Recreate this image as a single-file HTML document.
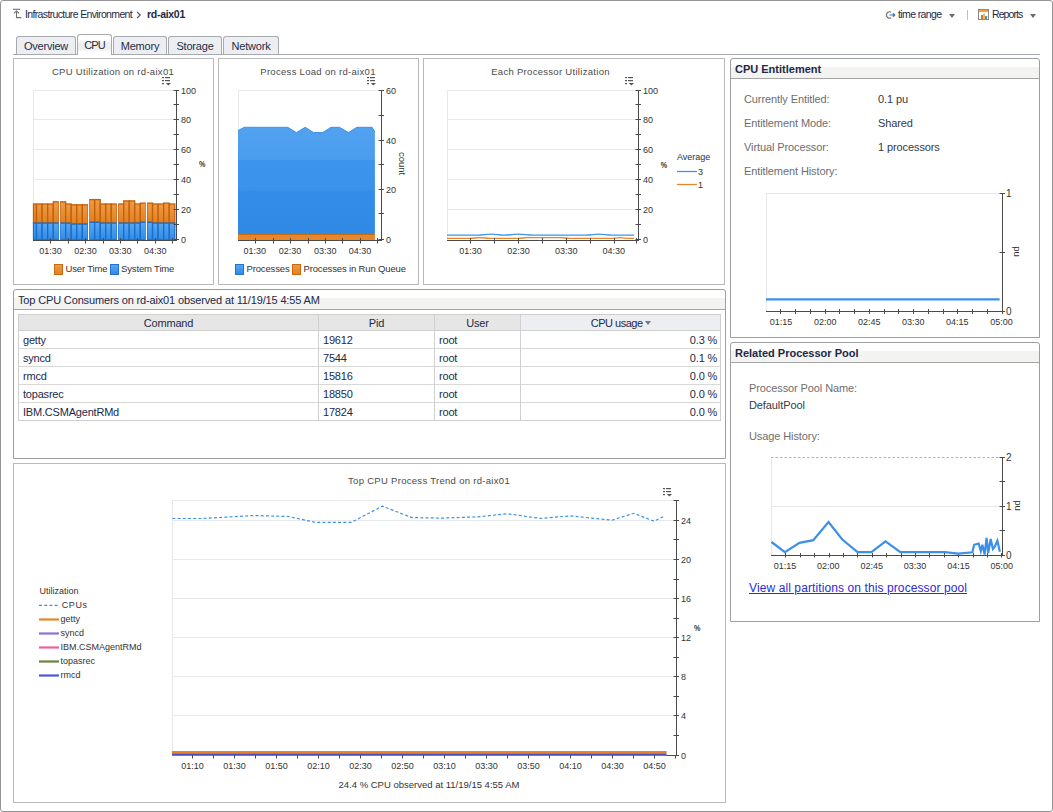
<!DOCTYPE html>
<html><head><meta charset="utf-8">
<style>
*{margin:0;padding:0;box-sizing:border-box}
html,body{width:1053px;height:812px;overflow:hidden;background:#fff;font-family:"Liberation Sans",sans-serif}
.a{position:absolute}
#frame{left:0;top:0;width:1053px;height:812px;border:1px solid #959595;border-radius:3px}
.t{position:absolute;white-space:nowrap;line-height:1}
.panel{position:absolute;border:1px solid #b9b9b9;background:#fff}
.rpanel{position:absolute;border:1px solid #9c9ea2;border-radius:3px 3px 0 0;background:#fff}
.tab{position:absolute;top:36px;height:18px;border:1px solid #a6a9ae;border-bottom:none;border-radius:3px 3px 0 0;background:#eceef2;font-size:11px;color:#1f2d45;text-align:center;line-height:18px;letter-spacing:-0.2px}
.tab.act{top:34px;height:21px;background:linear-gradient(#fff 0,#fff 20%,#eeeeee 45%,#eeeeee 70%,#fff 85%);line-height:21px;letter-spacing:-0.9px}
svg text{font-family:"Liberation Sans",sans-serif}
.th{font-size:11px;color:#1c2a48;letter-spacing:-0.2px}
.td{font-size:11px;color:#1c2a48;letter-spacing:-0.2px}
.hd{font-size:11px;font-weight:bold;color:#1c2a48}
.lb{font-size:11px;color:#6e6e6e;letter-spacing:-0.1px}
.vl{font-size:11px;color:#333a48;letter-spacing:-0.1px}
#ov{position:absolute;left:0;top:0}
</style></head><body>
<div class="a" id="frame"></div>

<!-- breadcrumb -->
<svg class="a" style="left:12px;top:8px" width="10" height="11" viewBox="0 0 10 11">
 <path d="M1 1.3H8" stroke="#707070" stroke-width="1.1" fill="none"/>
 <path d="M1.8 5.4L4.5 2.9L7.2 5.4M4.5 3.2V9.6H9.3" stroke="#707070" stroke-width="1.1" fill="none"/>
</svg>
<div class="t" style="left:25px;top:9px;font-size:10.5px;color:#1c2a48;letter-spacing:-0.64px">Infrastructure Environment</div>
<svg class="a" style="left:135px;top:11px" width="8" height="8" viewBox="0 0 8 8"><path d="M2 0.8L5.2 4L2 7.2" stroke="#555" stroke-width="1.2" fill="none"/></svg>
<div class="t" style="left:147px;top:9px;font-size:10.5px;font-weight:bold;color:#1c2a48;letter-spacing:-0.29px">rd-aix01</div>

<!-- top right -->
<svg class="a" style="left:885px;top:10px" width="11" height="10" viewBox="0 0 11 10">
 <path d="M6.2 2.2A3.2 3.2 0 1 0 6.2 7.8" stroke="#6a6a6a" stroke-width="1.1" fill="none"/>
 <path d="M4.5 5H9.5M7.8 3.2L9.8 5L7.8 6.8" stroke="#2d6fc0" stroke-width="1.1" fill="none"/>
</svg>
<div class="t" style="left:898px;top:9px;font-size:10.5px;color:#1c2a48;letter-spacing:-0.62px">time range</div>
<div class="a" style="left:949px;top:14px;width:0;height:0;border-left:3.5px solid transparent;border-right:3.5px solid transparent;border-top:4px solid #6b6b6b"></div>
<div class="a" style="left:967px;top:10px;width:1px;height:10px;background:#c0c0c0"></div>
<svg class="a" style="left:978px;top:9px" width="11" height="11" viewBox="0 0 11 11">
 <rect x="0.5" y="0.5" width="10" height="10" fill="#fff" stroke="#8a8a8a"/>
 <rect x="1" y="1" width="9" height="2" fill="#f0a040"/>
 <rect x="3" y="6" width="2" height="4" fill="#e07030"/>
 <rect x="5" y="4.5" width="2" height="5.5" fill="#f0c040"/>
 <rect x="7" y="7" width="2" height="3" fill="#4a90d8"/>
</svg>
<div class="t" style="left:992px;top:9px;font-size:10.5px;color:#1c2a48;letter-spacing:-0.9px">Reports</div>
<div class="a" style="left:1030px;top:14px;width:0;height:0;border-left:3.5px solid transparent;border-right:3.5px solid transparent;border-top:4px solid #6b6b6b"></div>

<!-- tabs -->
<div class="a" style="left:13px;top:54px;width:1027px;height:1px;background:#a6a9ae"></div>
<div class="tab" style="left:16px;width:60px">Overview</div>
<div class="tab act" style="left:77px;width:35px">CPU</div>
<div class="tab" style="left:113px;width:54px">Memory</div>
<div class="tab" style="left:168px;width:54px">Storage</div>
<div class="tab" style="left:223px;width:56px">Network</div>

<!-- panels -->
<div class="panel" style="left:13px;top:58px;width:201px;height:227px"></div>
<div class="panel" style="left:218px;top:58px;width:201px;height:227px"></div>
<div class="panel" style="left:423px;top:58px;width:302px;height:227px"></div>
<div class="rpanel" style="left:13px;top:289px;width:713px;height:170px"></div>
<div class="panel" style="left:13px;top:463px;width:713px;height:340px"></div>
<div class="rpanel" style="left:730px;top:58px;width:310px;height:280px"></div>
<div class="rpanel" style="left:730px;top:342px;width:310px;height:280px"></div>

<!-- table panel header -->
<div class="a" style="left:14px;top:298px;width:711px;height:11px;background:#f3f3f2"></div>
<div class="a" style="left:14px;top:309px;width:711px;height:1px;background:#a4a4a4"></div>
<div class="t" style="left:18px;top:295px;font-size:11px;color:#1c2a48;letter-spacing:-0.15px">Top CPU Consumers on rd-aix01 observed at 11/19/15 4:55 AM</div>

<!-- table -->
<div class="a" style="left:18px;top:314px;width:703px;height:107px;border:1px solid #cfcfcf;background:#fff"></div>
<div class="a" style="left:19px;top:315px;width:501px;height:15px;background:#e6e6e6"></div>
<div class="a" style="left:520px;top:315px;width:200px;height:15px;background:#eceef2"></div>
<div class="a" style="left:19px;top:330px;width:701px;height:1px;background:#cfcfcf"></div>
<div class="a" style="left:19px;top:348px;width:701px;height:1px;background:#d8d8d8"></div>
<div class="a" style="left:19px;top:366px;width:701px;height:1px;background:#d8d8d8"></div>
<div class="a" style="left:19px;top:384px;width:701px;height:1px;background:#d8d8d8"></div>
<div class="a" style="left:19px;top:402px;width:701px;height:1px;background:#d8d8d8"></div>
<div class="a" style="left:318px;top:315px;width:1px;height:105px;background:#d0d0d0"></div>
<div class="a" style="left:434px;top:315px;width:1px;height:105px;background:#d0d0d0"></div>
<div class="a" style="left:520px;top:315px;width:1px;height:105px;background:#d0d0d0"></div>
<div class="t th" style="left:19px;width:299px;top:318px;text-align:center">Command</div>
<div class="t th" style="left:319px;width:115px;top:318px;text-align:center">Pid</div>
<div class="t th" style="left:435px;width:85px;top:318px;text-align:center">User</div>
<div class="t th" style="left:521px;width:200px;top:318px;text-align:center;padding-left:0;letter-spacing:-0.5px">CPU usage <span style="display:inline-block;width:0;height:0;border-left:3.5px solid transparent;border-right:3.5px solid transparent;border-top:4px solid #6e7a88;vertical-align:2px"></span></div>
<div class="t td" style="left:23px;top:335px">getty</div>
<div class="t td" style="left:323px;top:335px">19612</div>
<div class="t td" style="left:439px;top:335px">root</div>
<div class="t td" style="left:520px;width:197px;top:335px;text-align:right">0.3 %</div>
<div class="t td" style="left:23px;top:353px">syncd</div>
<div class="t td" style="left:323px;top:353px">7544</div>
<div class="t td" style="left:439px;top:353px">root</div>
<div class="t td" style="left:520px;width:197px;top:353px;text-align:right">0.1 %</div>
<div class="t td" style="left:23px;top:371px">rmcd</div>
<div class="t td" style="left:323px;top:371px">15816</div>
<div class="t td" style="left:439px;top:371px">root</div>
<div class="t td" style="left:520px;width:197px;top:371px;text-align:right">0.0 %</div>
<div class="t td" style="left:23px;top:389px">topasrec</div>
<div class="t td" style="left:323px;top:389px">18850</div>
<div class="t td" style="left:439px;top:389px">root</div>
<div class="t td" style="left:520px;width:197px;top:389px;text-align:right">0.0 %</div>
<div class="t td" style="left:23px;top:407px">IBM.CSMAgentRMd</div>
<div class="t td" style="left:323px;top:407px">17824</div>
<div class="t td" style="left:439px;top:407px">root</div>
<div class="t td" style="left:520px;width:197px;top:407px;text-align:right">0.0 %</div>

<!-- CPU entitlement panel -->
<div class="a" style="left:731px;top:67px;width:308px;height:11px;background:#f3f3f2"></div>
<div class="a" style="left:731px;top:78px;width:308px;height:1px;background:#a4a4a4"></div>
<div class="t hd" style="left:735px;top:64px">CPU Entitlement</div>
<div class="t lb" style="left:744px;top:94px">Currently Entitled:</div>
<div class="t vl" style="left:878px;top:94px">0.1 pu</div>
<div class="t lb" style="left:744px;top:118px">Entitlement Mode:</div>
<div class="t vl" style="left:878px;top:118px">Shared</div>
<div class="t lb" style="left:744px;top:142px">Virtual Processor:</div>
<div class="t vl" style="left:878px;top:142px">1 processors</div>
<div class="t lb" style="left:744px;top:166px">Entitlement History:</div>

<!-- processor pool panel -->
<div class="a" style="left:731px;top:351px;width:308px;height:11px;background:#f3f3f2"></div>
<div class="a" style="left:731px;top:362px;width:308px;height:1px;background:#a4a4a4"></div>
<div class="t hd" style="left:735px;top:348px">Related Processor Pool</div>
<div class="t lb" style="left:749px;top:383px">Processor Pool Name:</div>
<div class="t vl" style="left:749px;top:400px">DefaultPool</div>
<div class="t lb" style="left:749px;top:431px">Usage History:</div>
<div class="t" style="left:749px;top:582px;font-size:12px;color:#2a2ae0;text-decoration:underline;letter-spacing:0.1px">View all partitions on this processor pool</div>

<svg id="ov" width="1053" height="812" viewBox="0 0 1053 812">
<defs>
<linearGradient id="gOr" x1="0" y1="0" x2="0" y2="1"><stop offset="0" stop-color="#ef9a45"/><stop offset="1" stop-color="#e2801f"/></linearGradient>
<linearGradient id="gBl" x1="0" y1="0" x2="0" y2="1"><stop offset="0" stop-color="#5aa8f2"/><stop offset="1" stop-color="#2e8ae8"/></linearGradient>
<linearGradient id="gArea" x1="0" y1="0" x2="0" y2="1"><stop offset="0" stop-color="#52a2f0"/><stop offset="0.3" stop-color="#4a9cee"/><stop offset="0.31" stop-color="#3d94ec"/><stop offset="0.59" stop-color="#3a92eb"/><stop offset="0.595" stop-color="#338de8"/><stop offset="1" stop-color="#2f8ae6"/></linearGradient>
</defs>
<text x="113" y="75" font-size="9.5" text-anchor="middle" fill="#4a4a4a" letter-spacing="0.3">CPU Utilization on rd-aix01</text>
<rect x="162" y="77" width="2" height="1.2" fill="#555"/>
<rect x="162" y="80" width="2" height="1.2" fill="#555"/>
<rect x="162" y="83" width="2" height="1.2" fill="#555"/>
<rect x="165" y="77" width="5" height="1.2" fill="#555"/>
<rect x="165" y="80" width="5" height="1.2" fill="#555"/>
<path d="M165.8 83h5.2l-2.6 2.6z" fill="#555"/>
<line x1="33.5" y1="90" x2="33.5" y2="240" stroke="#e6e8ec" stroke-width="1" />
<line x1="33" y1="90.5" x2="174" y2="90.5" stroke="#e6e8ec" stroke-width="1" />
<line x1="33" y1="119.5" x2="174" y2="119.5" stroke="#e6e8ec" stroke-width="1" />
<line x1="33" y1="149.5" x2="174" y2="149.5" stroke="#e6e8ec" stroke-width="1" />
<line x1="33" y1="179.5" x2="174" y2="179.5" stroke="#e6e8ec" stroke-width="1" />
<line x1="33" y1="209.5" x2="174" y2="209.5" stroke="#e6e8ec" stroke-width="1" />
<rect x="33.50" y="204.00" width="3.00" height="19.10" fill="url(#gOr)" stroke="#c2600a" stroke-width="1.3"/>
<rect x="33.50" y="223.10" width="3.00" height="16.90" fill="url(#gBl)" stroke="#196cc8" stroke-width="1.3"/>
<rect x="36.50" y="204.00" width="5.60" height="19.10" fill="url(#gOr)" stroke="#c2600a" stroke-width="1.3"/>
<rect x="36.50" y="223.10" width="5.60" height="16.90" fill="url(#gBl)" stroke="#196cc8" stroke-width="1.3"/>
<rect x="42.10" y="204.00" width="5.60" height="19.10" fill="url(#gOr)" stroke="#c2600a" stroke-width="1.3"/>
<rect x="42.10" y="223.10" width="5.60" height="16.90" fill="url(#gBl)" stroke="#196cc8" stroke-width="1.3"/>
<rect x="47.70" y="204.00" width="5.60" height="19.10" fill="url(#gOr)" stroke="#c2600a" stroke-width="1.3"/>
<rect x="47.70" y="223.10" width="5.60" height="16.90" fill="url(#gBl)" stroke="#196cc8" stroke-width="1.3"/>
<rect x="53.30" y="201.80" width="5.60" height="21.30" fill="url(#gOr)" stroke="#c2600a" stroke-width="1.3"/>
<rect x="53.30" y="223.10" width="5.60" height="16.90" fill="url(#gBl)" stroke="#196cc8" stroke-width="1.3"/>
<rect x="60.10" y="201.80" width="5.56" height="21.30" fill="url(#gOr)" stroke="#c2600a" stroke-width="1.3"/>
<rect x="60.10" y="223.10" width="5.56" height="16.90" fill="url(#gBl)" stroke="#196cc8" stroke-width="1.3"/>
<rect x="65.66" y="204.00" width="5.56" height="19.10" fill="url(#gOr)" stroke="#c2600a" stroke-width="1.3"/>
<rect x="65.66" y="223.10" width="5.56" height="16.90" fill="url(#gBl)" stroke="#196cc8" stroke-width="1.3"/>
<rect x="71.22" y="204.80" width="5.56" height="19.30" fill="url(#gOr)" stroke="#c2600a" stroke-width="1.3"/>
<rect x="71.22" y="224.10" width="5.56" height="15.90" fill="url(#gBl)" stroke="#196cc8" stroke-width="1.3"/>
<rect x="76.78" y="204.80" width="5.56" height="19.30" fill="url(#gOr)" stroke="#c2600a" stroke-width="1.3"/>
<rect x="76.78" y="224.10" width="5.56" height="15.90" fill="url(#gBl)" stroke="#196cc8" stroke-width="1.3"/>
<rect x="82.34" y="204.80" width="5.56" height="19.30" fill="url(#gOr)" stroke="#c2600a" stroke-width="1.3"/>
<rect x="82.34" y="224.10" width="5.56" height="15.90" fill="url(#gBl)" stroke="#196cc8" stroke-width="1.3"/>
<rect x="89.20" y="199.60" width="5.52" height="22.70" fill="url(#gOr)" stroke="#c2600a" stroke-width="1.3"/>
<rect x="89.20" y="222.30" width="5.52" height="17.70" fill="url(#gBl)" stroke="#196cc8" stroke-width="1.3"/>
<rect x="94.72" y="199.60" width="5.52" height="22.70" fill="url(#gOr)" stroke="#c2600a" stroke-width="1.3"/>
<rect x="94.72" y="222.30" width="5.52" height="17.70" fill="url(#gBl)" stroke="#196cc8" stroke-width="1.3"/>
<rect x="100.24" y="204.00" width="5.52" height="19.10" fill="url(#gOr)" stroke="#c2600a" stroke-width="1.3"/>
<rect x="100.24" y="223.10" width="5.52" height="16.90" fill="url(#gBl)" stroke="#196cc8" stroke-width="1.3"/>
<rect x="105.76" y="204.00" width="5.52" height="19.10" fill="url(#gOr)" stroke="#c2600a" stroke-width="1.3"/>
<rect x="105.76" y="223.10" width="5.52" height="16.90" fill="url(#gBl)" stroke="#196cc8" stroke-width="1.3"/>
<rect x="111.28" y="204.00" width="5.52" height="19.10" fill="url(#gOr)" stroke="#c2600a" stroke-width="1.3"/>
<rect x="111.28" y="223.10" width="5.52" height="16.90" fill="url(#gBl)" stroke="#196cc8" stroke-width="1.3"/>
<rect x="118.20" y="204.00" width="5.52" height="19.10" fill="url(#gOr)" stroke="#c2600a" stroke-width="1.3"/>
<rect x="118.20" y="223.10" width="5.52" height="16.90" fill="url(#gBl)" stroke="#196cc8" stroke-width="1.3"/>
<rect x="123.72" y="200.90" width="5.52" height="22.20" fill="url(#gOr)" stroke="#c2600a" stroke-width="1.3"/>
<rect x="123.72" y="223.10" width="5.52" height="16.90" fill="url(#gBl)" stroke="#196cc8" stroke-width="1.3"/>
<rect x="129.24" y="200.90" width="5.52" height="22.20" fill="url(#gOr)" stroke="#c2600a" stroke-width="1.3"/>
<rect x="129.24" y="223.10" width="5.52" height="16.90" fill="url(#gBl)" stroke="#196cc8" stroke-width="1.3"/>
<rect x="134.76" y="204.00" width="5.52" height="19.10" fill="url(#gOr)" stroke="#c2600a" stroke-width="1.3"/>
<rect x="134.76" y="223.10" width="5.52" height="16.90" fill="url(#gBl)" stroke="#196cc8" stroke-width="1.3"/>
<rect x="140.28" y="203.10" width="5.52" height="19.20" fill="url(#gOr)" stroke="#c2600a" stroke-width="1.3"/>
<rect x="140.28" y="222.30" width="5.52" height="17.70" fill="url(#gBl)" stroke="#196cc8" stroke-width="1.3"/>
<rect x="147.00" y="203.10" width="5.56" height="19.20" fill="url(#gOr)" stroke="#c2600a" stroke-width="1.3"/>
<rect x="147.00" y="222.30" width="5.56" height="17.70" fill="url(#gBl)" stroke="#196cc8" stroke-width="1.3"/>
<rect x="152.56" y="204.00" width="5.56" height="19.10" fill="url(#gOr)" stroke="#c2600a" stroke-width="1.3"/>
<rect x="152.56" y="223.10" width="5.56" height="16.90" fill="url(#gBl)" stroke="#196cc8" stroke-width="1.3"/>
<rect x="158.12" y="204.00" width="5.56" height="19.10" fill="url(#gOr)" stroke="#c2600a" stroke-width="1.3"/>
<rect x="158.12" y="223.10" width="5.56" height="16.90" fill="url(#gBl)" stroke="#196cc8" stroke-width="1.3"/>
<rect x="163.68" y="203.10" width="5.56" height="20.00" fill="url(#gOr)" stroke="#c2600a" stroke-width="1.3"/>
<rect x="163.68" y="223.10" width="5.56" height="16.90" fill="url(#gBl)" stroke="#196cc8" stroke-width="1.3"/>
<rect x="169.24" y="204.00" width="5.56" height="19.10" fill="url(#gOr)" stroke="#c2600a" stroke-width="1.3"/>
<rect x="169.24" y="223.10" width="5.56" height="16.90" fill="url(#gBl)" stroke="#196cc8" stroke-width="1.3"/>
<rect x="58.90" y="195" width="1.2" height="45" fill="#fff"/>
<rect x="87.95" y="195" width="1.2" height="45" fill="#fff"/>
<rect x="116.90" y="195" width="1.2" height="45" fill="#fff"/>
<rect x="145.80" y="195" width="1.2" height="45" fill="#fff"/>
<line x1="176.5" y1="90" x2="176.5" y2="241" stroke="#4a4a4a" stroke-width="1" />
<line x1="173.5" y1="90.5" x2="179" y2="90.5" stroke="#4a4a4a" stroke-width="1" />
<line x1="173.5" y1="104.5" x2="179" y2="104.5" stroke="#4a4a4a" stroke-width="1" />
<line x1="173.5" y1="119.5" x2="179" y2="119.5" stroke="#4a4a4a" stroke-width="1" />
<line x1="173.5" y1="134.5" x2="179" y2="134.5" stroke="#4a4a4a" stroke-width="1" />
<line x1="173.5" y1="149.5" x2="179" y2="149.5" stroke="#4a4a4a" stroke-width="1" />
<line x1="173.5" y1="164.5" x2="179" y2="164.5" stroke="#4a4a4a" stroke-width="1" />
<line x1="173.5" y1="179.5" x2="179" y2="179.5" stroke="#4a4a4a" stroke-width="1" />
<line x1="173.5" y1="194.5" x2="179" y2="194.5" stroke="#4a4a4a" stroke-width="1" />
<line x1="173.5" y1="209.5" x2="179" y2="209.5" stroke="#4a4a4a" stroke-width="1" />
<line x1="173.5" y1="224.5" x2="179" y2="224.5" stroke="#4a4a4a" stroke-width="1" />
<line x1="173.5" y1="239.5" x2="179" y2="239.5" stroke="#4a4a4a" stroke-width="1" />
<text x="181" y="93.5" font-size="9" text-anchor="start" fill="#333" >100</text>
<text x="181" y="122.5" font-size="9" text-anchor="start" fill="#333" >80</text>
<text x="181" y="152.5" font-size="9" text-anchor="start" fill="#333" >60</text>
<text x="181" y="182.5" font-size="9" text-anchor="start" fill="#333" >40</text>
<text x="181" y="212.5" font-size="9" text-anchor="start" fill="#333" >20</text>
<text x="181" y="242.5" font-size="9" text-anchor="start" fill="#333" >0</text>
<line x1="33" y1="240.5" x2="177" y2="240.5" stroke="#4a4a4a" stroke-width="1" />
<line x1="50.5" y1="238" x2="50.5" y2="243.5" stroke="#4a4a4a" stroke-width="1" />
<line x1="68.5" y1="238" x2="68.5" y2="243.5" stroke="#4a4a4a" stroke-width="1" />
<line x1="85.5" y1="238" x2="85.5" y2="243.5" stroke="#4a4a4a" stroke-width="1" />
<line x1="103.5" y1="238" x2="103.5" y2="243.5" stroke="#4a4a4a" stroke-width="1" />
<line x1="120.5" y1="238" x2="120.5" y2="243.5" stroke="#4a4a4a" stroke-width="1" />
<line x1="137.5" y1="238" x2="137.5" y2="243.5" stroke="#4a4a4a" stroke-width="1" />
<line x1="155.5" y1="238" x2="155.5" y2="243.5" stroke="#4a4a4a" stroke-width="1" />
<line x1="172.5" y1="238" x2="172.5" y2="243.5" stroke="#4a4a4a" stroke-width="1" />
<text x="50.5" y="254" font-size="9" text-anchor="middle" fill="#333" >01:30</text>
<text x="85.5" y="254" font-size="9" text-anchor="middle" fill="#333" >02:30</text>
<text x="120.3" y="254" font-size="9" text-anchor="middle" fill="#333" >03:30</text>
<text x="155.3" y="254" font-size="9" text-anchor="middle" fill="#333" >04:30</text>
<text x="202.3" y="167.4" font-size="9" text-anchor="middle" fill="#333" font-weight="bold" transform="translate(202.3 0) scale(0.8 1) translate(-202.3 0)">%</text>
<rect x="54.5" y="264.5" width="8" height="10" fill="url(#gOr)" stroke="#c96a12"/>
<text x="65.5" y="271.8" font-size="9.5" text-anchor="start" fill="#333" letter-spacing="-0.15">User Time</text>
<rect x="110.5" y="264.5" width="8" height="10" fill="url(#gBl)" stroke="#1f74d0"/>
<text x="121" y="271.8" font-size="9.5" text-anchor="start" fill="#333" letter-spacing="-0.15">System Time</text>
<text x="318" y="75" font-size="9.5" text-anchor="middle" fill="#4a4a4a" letter-spacing="0.3">Process Load on rd-aix01</text>
<rect x="367" y="77" width="2" height="1.2" fill="#555"/>
<rect x="367" y="80" width="2" height="1.2" fill="#555"/>
<rect x="367" y="83" width="2" height="1.2" fill="#555"/>
<rect x="370" y="77" width="5" height="1.2" fill="#555"/>
<rect x="370" y="80" width="5" height="1.2" fill="#555"/>
<path d="M370.8 83h5.2l-2.6 2.6z" fill="#555"/>
<line x1="238.5" y1="90" x2="238.5" y2="240" stroke="#e6e8ec" stroke-width="1" />
<line x1="238" y1="90.5" x2="379" y2="90.5" stroke="#e6e8ec" stroke-width="1" />
<polygon points="238,130.6 244.4,127.3 287.7,127.3 296.4,132.6 305.2,127.3 313.6,132.6 322.7,132.6 331,127.3 339.4,127.3 348.5,132.6 356.9,127.3 372.1,127.3 374.9,132.1 374.9,234 238,234" fill="url(#gArea)"/>
<polyline points="238,130.6 244.4,127.3 287.7,127.3 296.4,132.6 305.2,127.3 313.6,132.6 322.7,132.6 331,127.3 339.4,127.3 348.5,132.6 356.9,127.3 372.1,127.3 374.9,132.1" fill="none" stroke="#3a93ea" stroke-width="1"/>
<rect x="238" y="234" width="136.9" height="6" fill="#e8872a"/>
<line x1="238" y1="234.5" x2="374.9" y2="234.5" stroke="#c86a14" stroke-width="1"/>
<line x1="381.5" y1="90" x2="381.5" y2="241" stroke="#4a4a4a" stroke-width="1" />
<line x1="378.5" y1="90.5" x2="384" y2="90.5" stroke="#4a4a4a" stroke-width="1" />
<line x1="378.5" y1="115.5" x2="384" y2="115.5" stroke="#4a4a4a" stroke-width="1" />
<line x1="378.5" y1="140.5" x2="384" y2="140.5" stroke="#4a4a4a" stroke-width="1" />
<line x1="378.5" y1="164.5" x2="384" y2="164.5" stroke="#4a4a4a" stroke-width="1" />
<line x1="378.5" y1="189.5" x2="384" y2="189.5" stroke="#4a4a4a" stroke-width="1" />
<line x1="378.5" y1="213.5" x2="384" y2="213.5" stroke="#4a4a4a" stroke-width="1" />
<line x1="378.5" y1="239.5" x2="384" y2="239.5" stroke="#4a4a4a" stroke-width="1" />
<text x="386" y="93.5" font-size="9" text-anchor="start" fill="#333" >60</text>
<text x="386" y="143.5" font-size="9" text-anchor="start" fill="#333" >40</text>
<text x="386" y="192.5" font-size="9" text-anchor="start" fill="#333" >20</text>
<text x="386" y="242.5" font-size="9" text-anchor="start" fill="#333" >0</text>
<line x1="238" y1="240.5" x2="382" y2="240.5" stroke="#4a4a4a" stroke-width="1" />
<line x1="255.5" y1="238" x2="255.5" y2="243.5" stroke="#4a4a4a" stroke-width="1" />
<line x1="273.5" y1="238" x2="273.5" y2="243.5" stroke="#4a4a4a" stroke-width="1" />
<line x1="290.5" y1="238" x2="290.5" y2="243.5" stroke="#4a4a4a" stroke-width="1" />
<line x1="308.5" y1="238" x2="308.5" y2="243.5" stroke="#4a4a4a" stroke-width="1" />
<line x1="325.5" y1="238" x2="325.5" y2="243.5" stroke="#4a4a4a" stroke-width="1" />
<line x1="342.5" y1="238" x2="342.5" y2="243.5" stroke="#4a4a4a" stroke-width="1" />
<line x1="360.5" y1="238" x2="360.5" y2="243.5" stroke="#4a4a4a" stroke-width="1" />
<line x1="377.5" y1="238" x2="377.5" y2="243.5" stroke="#4a4a4a" stroke-width="1" />
<text x="254.8" y="254" font-size="9" text-anchor="middle" fill="#333" >01:30</text>
<text x="290" y="254" font-size="9" text-anchor="middle" fill="#333" >02:30</text>
<text x="325.2" y="254" font-size="9" text-anchor="middle" fill="#333" >03:30</text>
<text x="360" y="254" font-size="9" text-anchor="middle" fill="#333" >04:30</text>
<text x="401.5" y="163.5" font-size="9.5" text-anchor="middle" fill="#333" transform="rotate(90 401.5 163.5)" dy="3">count</text>
<rect x="235.5" y="264.5" width="8" height="10" fill="url(#gBl)" stroke="#1f74d0"/>
<text x="246.5" y="271.8" font-size="9.5" text-anchor="start" fill="#333" letter-spacing="-0.15">Processes</text>
<rect x="292.5" y="264.5" width="8" height="10" fill="url(#gOr)" stroke="#c96a12"/>
<text x="303.5" y="271.8" font-size="9.5" text-anchor="start" fill="#333" letter-spacing="-0.15">Processes in Run Queue</text>
<text x="550.5" y="75" font-size="9.5" text-anchor="middle" fill="#4a4a4a" letter-spacing="0.3">Each Processor Utilization</text>
<rect x="625" y="77" width="2" height="1.2" fill="#555"/>
<rect x="625" y="80" width="2" height="1.2" fill="#555"/>
<rect x="625" y="83" width="2" height="1.2" fill="#555"/>
<rect x="628" y="77" width="5" height="1.2" fill="#555"/>
<rect x="628" y="80" width="5" height="1.2" fill="#555"/>
<path d="M628.8 83h5.2l-2.6 2.6z" fill="#555"/>
<line x1="447.5" y1="90" x2="447.5" y2="240" stroke="#e6e8ec" stroke-width="1" />
<line x1="447" y1="90.5" x2="636" y2="90.5" stroke="#e6e8ec" stroke-width="1" />
<line x1="447" y1="119.5" x2="636" y2="119.5" stroke="#e6e8ec" stroke-width="1" />
<line x1="447" y1="149.5" x2="636" y2="149.5" stroke="#e6e8ec" stroke-width="1" />
<line x1="447" y1="179.5" x2="636" y2="179.5" stroke="#e6e8ec" stroke-width="1" />
<line x1="447" y1="209.5" x2="636" y2="209.5" stroke="#e6e8ec" stroke-width="1" />
<path d="M447 235.2 H478 C483 235.2 486 234.2 491 234.2 C496 234.2 499 235.2 504 235.2 C509 235.2 512 234.2 518 234.2 C524 234.2 527 235.2 533 235.2 H586 C591 235.2 594 234.2 599 234.2 C604 234.2 607 235.2 612 235.2 H634" fill="none" stroke="#3d95ea" stroke-width="1.3"/>
<path d="M447 238.4 H470 C474 238.4 476 237.6 480 237.6 C484 237.6 486 238.4 490 238.4 H518 C522 238.4 524 237.6 528 237.6 H560 C564 237.6 566 238.4 570 238.4 H612 C615 238.4 616 237.6 620 237.6 C624 237.6 625 238.4 628 238.4 H634" fill="none" stroke="#e8842a" stroke-width="1.3"/>
<line x1="638.5" y1="90" x2="638.5" y2="241" stroke="#4a4a4a" stroke-width="1" />
<line x1="635.5" y1="90.5" x2="641" y2="90.5" stroke="#4a4a4a" stroke-width="1" />
<line x1="635.5" y1="104.5" x2="641" y2="104.5" stroke="#4a4a4a" stroke-width="1" />
<line x1="635.5" y1="119.5" x2="641" y2="119.5" stroke="#4a4a4a" stroke-width="1" />
<line x1="635.5" y1="134.5" x2="641" y2="134.5" stroke="#4a4a4a" stroke-width="1" />
<line x1="635.5" y1="149.5" x2="641" y2="149.5" stroke="#4a4a4a" stroke-width="1" />
<line x1="635.5" y1="164.5" x2="641" y2="164.5" stroke="#4a4a4a" stroke-width="1" />
<line x1="635.5" y1="179.5" x2="641" y2="179.5" stroke="#4a4a4a" stroke-width="1" />
<line x1="635.5" y1="194.5" x2="641" y2="194.5" stroke="#4a4a4a" stroke-width="1" />
<line x1="635.5" y1="209.5" x2="641" y2="209.5" stroke="#4a4a4a" stroke-width="1" />
<line x1="635.5" y1="224.5" x2="641" y2="224.5" stroke="#4a4a4a" stroke-width="1" />
<line x1="635.5" y1="239.5" x2="641" y2="239.5" stroke="#4a4a4a" stroke-width="1" />
<text x="643" y="93.5" font-size="9" text-anchor="start" fill="#333" >100</text>
<text x="643" y="122.5" font-size="9" text-anchor="start" fill="#333" >80</text>
<text x="643" y="152.5" font-size="9" text-anchor="start" fill="#333" >60</text>
<text x="643" y="182.5" font-size="9" text-anchor="start" fill="#333" >40</text>
<text x="643" y="212.5" font-size="9" text-anchor="start" fill="#333" >20</text>
<text x="643" y="242.5" font-size="9" text-anchor="start" fill="#333" >0</text>
<line x1="447" y1="240.5" x2="639" y2="240.5" stroke="#4a4a4a" stroke-width="1" />
<line x1="470.5" y1="238" x2="470.5" y2="243.5" stroke="#4a4a4a" stroke-width="1" />
<line x1="494.5" y1="238" x2="494.5" y2="243.5" stroke="#4a4a4a" stroke-width="1" />
<line x1="518.5" y1="238" x2="518.5" y2="243.5" stroke="#4a4a4a" stroke-width="1" />
<line x1="542.5" y1="238" x2="542.5" y2="243.5" stroke="#4a4a4a" stroke-width="1" />
<line x1="566.5" y1="238" x2="566.5" y2="243.5" stroke="#4a4a4a" stroke-width="1" />
<line x1="590.5" y1="238" x2="590.5" y2="243.5" stroke="#4a4a4a" stroke-width="1" />
<line x1="614.5" y1="238" x2="614.5" y2="243.5" stroke="#4a4a4a" stroke-width="1" />
<line x1="636.5" y1="238" x2="636.5" y2="243.5" stroke="#4a4a4a" stroke-width="1" />
<text x="470.5" y="254" font-size="9" text-anchor="middle" fill="#333" >01:30</text>
<text x="518.5" y="254" font-size="9" text-anchor="middle" fill="#333" >02:30</text>
<text x="566.3" y="254" font-size="9" text-anchor="middle" fill="#333" >03:30</text>
<text x="613.8" y="254" font-size="9" text-anchor="middle" fill="#333" >04:30</text>
<text x="664" y="167.6" font-size="9" text-anchor="middle" fill="#333" font-weight="bold" transform="translate(664 0) scale(0.8 1) translate(-664 0)">%</text>
<text x="677" y="160" font-size="9" text-anchor="start" fill="#333" >Average</text>
<line x1="677" y1="171.5" x2="697" y2="171.5" stroke="#3d95ea" stroke-width="1.3" />
<text x="698" y="174.5" font-size="9" text-anchor="start" fill="#333" >3</text>
<line x1="677" y1="184.5" x2="697" y2="184.5" stroke="#e8842a" stroke-width="1.3" />
<text x="698" y="187.5" font-size="9" text-anchor="start" fill="#333" >1</text>
<text x="429" y="483.5" font-size="9.5" text-anchor="middle" fill="#4a4a4a" letter-spacing="0.3">Top CPU Process Trend on rd-aix01</text>
<rect x="663" y="488" width="2" height="1.2" fill="#555"/>
<rect x="663" y="491" width="2" height="1.2" fill="#555"/>
<rect x="663" y="494" width="2" height="1.2" fill="#555"/>
<rect x="666" y="488" width="5" height="1.2" fill="#555"/>
<rect x="666" y="491" width="5" height="1.2" fill="#555"/>
<path d="M666.8 494h5.2l-2.6 2.6z" fill="#555"/>
<line x1="172.5" y1="500" x2="172.5" y2="755" stroke="#e6e8ec" stroke-width="1" />
<line x1="172" y1="500.5" x2="674" y2="500.5" stroke="#e6e8ec" stroke-width="1" />
<line x1="172" y1="520.5" x2="673" y2="520.5" stroke="#e6e8ec" stroke-width="1" />
<line x1="172" y1="559.5" x2="673" y2="559.5" stroke="#e6e8ec" stroke-width="1" />
<line x1="172" y1="598.5" x2="673" y2="598.5" stroke="#e6e8ec" stroke-width="1" />
<line x1="172" y1="637.5" x2="673" y2="637.5" stroke="#e6e8ec" stroke-width="1" />
<line x1="172" y1="676.5" x2="673" y2="676.5" stroke="#e6e8ec" stroke-width="1" />
<line x1="172" y1="715.5" x2="673" y2="715.5" stroke="#e6e8ec" stroke-width="1" />
<polyline points="172.4,518.5 202,518.5 253.9,515.5 288.5,516.5 315.6,522.4 351.4,522.4 382.3,506.1 411.9,517.6 442.5,518.1 478.3,516.8 507.3,513.7 540.3,518.4 570.6,515.9 611.9,520.2 633.9,513.3 654,521.2 664.2,516.2" fill="none" stroke="#3b91e8" stroke-width="1.2" stroke-dasharray="3,2.2"/>
<rect x="172" y="751" width="494.5" height="2.3" fill="#e8832a"/>
<rect x="172" y="753.3" width="494.5" height="2.5" fill="#5050c8"/>
<line x1="676.5" y1="500" x2="676.5" y2="756" stroke="#4a4a4a" stroke-width="1" />
<line x1="673.5" y1="755.5" x2="679" y2="755.5" stroke="#4a4a4a" stroke-width="1" />
<line x1="673.5" y1="735.5" x2="679" y2="735.5" stroke="#4a4a4a" stroke-width="1" />
<line x1="673.5" y1="715.5" x2="679" y2="715.5" stroke="#4a4a4a" stroke-width="1" />
<line x1="673.5" y1="696.5" x2="679" y2="696.5" stroke="#4a4a4a" stroke-width="1" />
<line x1="673.5" y1="676.5" x2="679" y2="676.5" stroke="#4a4a4a" stroke-width="1" />
<line x1="673.5" y1="657.5" x2="679" y2="657.5" stroke="#4a4a4a" stroke-width="1" />
<line x1="673.5" y1="637.5" x2="679" y2="637.5" stroke="#4a4a4a" stroke-width="1" />
<line x1="673.5" y1="618.5" x2="679" y2="618.5" stroke="#4a4a4a" stroke-width="1" />
<line x1="673.5" y1="598.5" x2="679" y2="598.5" stroke="#4a4a4a" stroke-width="1" />
<line x1="673.5" y1="579.5" x2="679" y2="579.5" stroke="#4a4a4a" stroke-width="1" />
<line x1="673.5" y1="559.5" x2="679" y2="559.5" stroke="#4a4a4a" stroke-width="1" />
<line x1="673.5" y1="539.5" x2="679" y2="539.5" stroke="#4a4a4a" stroke-width="1" />
<line x1="673.5" y1="520.5" x2="679" y2="520.5" stroke="#4a4a4a" stroke-width="1" />
<line x1="673.5" y1="500.5" x2="679" y2="500.5" stroke="#4a4a4a" stroke-width="1" />
<text x="681" y="523.8" font-size="9" text-anchor="start" fill="#333" >24</text>
<text x="681" y="562.8" font-size="9" text-anchor="start" fill="#333" >20</text>
<text x="681" y="601.8" font-size="9" text-anchor="start" fill="#333" >16</text>
<text x="681" y="640.8" font-size="9" text-anchor="start" fill="#333" >12</text>
<text x="681" y="679.8" font-size="9" text-anchor="start" fill="#333" >8</text>
<text x="681" y="718.8" font-size="9" text-anchor="start" fill="#333" >4</text>
<text x="681" y="758.8" font-size="9" text-anchor="start" fill="#333" >0</text>
<line x1="666" y1="755.5" x2="677" y2="755.5" stroke="#4a4a4a" stroke-width="1" />
<line x1="192.5" y1="755" x2="192.5" y2="758.5" stroke="#4a4a4a" stroke-width="1" />
<line x1="213.5" y1="755" x2="213.5" y2="758.5" stroke="#4a4a4a" stroke-width="1" />
<line x1="234.5" y1="755" x2="234.5" y2="758.5" stroke="#4a4a4a" stroke-width="1" />
<line x1="255.5" y1="755" x2="255.5" y2="758.5" stroke="#4a4a4a" stroke-width="1" />
<line x1="276.5" y1="755" x2="276.5" y2="758.5" stroke="#4a4a4a" stroke-width="1" />
<line x1="297.5" y1="755" x2="297.5" y2="758.5" stroke="#4a4a4a" stroke-width="1" />
<line x1="318.5" y1="755" x2="318.5" y2="758.5" stroke="#4a4a4a" stroke-width="1" />
<line x1="339.5" y1="755" x2="339.5" y2="758.5" stroke="#4a4a4a" stroke-width="1" />
<line x1="360.5" y1="755" x2="360.5" y2="758.5" stroke="#4a4a4a" stroke-width="1" />
<line x1="381.5" y1="755" x2="381.5" y2="758.5" stroke="#4a4a4a" stroke-width="1" />
<line x1="402.5" y1="755" x2="402.5" y2="758.5" stroke="#4a4a4a" stroke-width="1" />
<line x1="423.5" y1="755" x2="423.5" y2="758.5" stroke="#4a4a4a" stroke-width="1" />
<line x1="444.5" y1="755" x2="444.5" y2="758.5" stroke="#4a4a4a" stroke-width="1" />
<line x1="465.5" y1="755" x2="465.5" y2="758.5" stroke="#4a4a4a" stroke-width="1" />
<line x1="486.5" y1="755" x2="486.5" y2="758.5" stroke="#4a4a4a" stroke-width="1" />
<line x1="507.5" y1="755" x2="507.5" y2="758.5" stroke="#4a4a4a" stroke-width="1" />
<line x1="528.5" y1="755" x2="528.5" y2="758.5" stroke="#4a4a4a" stroke-width="1" />
<line x1="549.5" y1="755" x2="549.5" y2="758.5" stroke="#4a4a4a" stroke-width="1" />
<line x1="570.5" y1="755" x2="570.5" y2="758.5" stroke="#4a4a4a" stroke-width="1" />
<line x1="591.5" y1="755" x2="591.5" y2="758.5" stroke="#4a4a4a" stroke-width="1" />
<line x1="612.5" y1="755" x2="612.5" y2="758.5" stroke="#4a4a4a" stroke-width="1" />
<line x1="633.5" y1="755" x2="633.5" y2="758.5" stroke="#4a4a4a" stroke-width="1" />
<line x1="654.5" y1="755" x2="654.5" y2="758.5" stroke="#4a4a4a" stroke-width="1" />
<line x1="675.5" y1="755" x2="675.5" y2="758.5" stroke="#4a4a4a" stroke-width="1" />
<text x="192.6" y="769" font-size="9" text-anchor="middle" fill="#333" >01:10</text>
<text x="234.6" y="769" font-size="9" text-anchor="middle" fill="#333" >01:30</text>
<text x="276.6" y="769" font-size="9" text-anchor="middle" fill="#333" >01:50</text>
<text x="318.6" y="769" font-size="9" text-anchor="middle" fill="#333" >02:10</text>
<text x="360.6" y="769" font-size="9" text-anchor="middle" fill="#333" >02:30</text>
<text x="402.6" y="769" font-size="9" text-anchor="middle" fill="#333" >02:50</text>
<text x="444.6" y="769" font-size="9" text-anchor="middle" fill="#333" >03:10</text>
<text x="486.6" y="769" font-size="9" text-anchor="middle" fill="#333" >03:30</text>
<text x="528.6" y="769" font-size="9" text-anchor="middle" fill="#333" >03:50</text>
<text x="570.6" y="769" font-size="9" text-anchor="middle" fill="#333" >04:10</text>
<text x="612.6" y="769" font-size="9" text-anchor="middle" fill="#333" >04:30</text>
<text x="654.6" y="769" font-size="9" text-anchor="middle" fill="#333" >04:50</text>
<text x="697.3" y="631.4" font-size="9" text-anchor="middle" fill="#333" font-weight="bold" transform="translate(697.3 0) scale(0.8 1) translate(-697.3 0)">%</text>
<text x="429" y="787.5" font-size="9.5" text-anchor="middle" fill="#333" >24.4 % CPU observed at 11/19/15 4:55 AM</text>
<text x="39.5" y="594" font-size="9" text-anchor="start" fill="#333" >Utilization</text>
<line x1="39" y1="605.3" x2="59" y2="605.3" stroke="#3b91e8" stroke-width="1.2" stroke-dasharray="3,2.2"/>
<text x="61.7" y="607.8" font-size="9" text-anchor="start" fill="#333" letter-spacing="0.6">CPUs</text>
<line x1="39" y1="619.5" x2="59" y2="619.5" stroke="#e8832a" stroke-width="2.2" />
<text x="60.5" y="621.9" font-size="9" text-anchor="start" fill="#333" >getty</text>
<line x1="39" y1="633.5" x2="59" y2="633.5" stroke="#8d6fd8" stroke-width="2.2" />
<text x="60.5" y="635.9" font-size="9" text-anchor="start" fill="#333" >syncd</text>
<line x1="39" y1="647.5" x2="59" y2="647.5" stroke="#ee5f9c" stroke-width="2.2" />
<text x="60.5" y="649.9" font-size="9" text-anchor="start" fill="#333" >IBM.CSMAgentRMd</text>
<line x1="39" y1="661.5" x2="59" y2="661.5" stroke="#6e8240" stroke-width="2.2" />
<text x="60.5" y="663.9" font-size="9" text-anchor="start" fill="#333" >topasrec</text>
<line x1="39" y1="675.5" x2="59" y2="675.5" stroke="#4b56d6" stroke-width="2.2" />
<text x="60.5" y="677.9" font-size="9" text-anchor="start" fill="#333" >rmcd</text>
<line x1="766.5" y1="193" x2="766.5" y2="311" stroke="#e6e8ec" stroke-width="1" />
<line x1="766" y1="193.5" x2="1000" y2="193.5" stroke="#e6e8ec" stroke-width="1" />
<line x1="1002.5" y1="193" x2="1002.5" y2="312" stroke="#4a4a4a" stroke-width="1" />
<line x1="999.5" y1="193.5" x2="1005" y2="193.5" stroke="#4a4a4a" stroke-width="1" />
<line x1="999.5" y1="252.5" x2="1005" y2="252.5" stroke="#4a4a4a" stroke-width="1" />
<line x1="999.5" y1="311.5" x2="1005" y2="311.5" stroke="#4a4a4a" stroke-width="1" />
<text x="1006" y="196.8" font-size="10" text-anchor="start" fill="#333" >1</text>
<text x="1006" y="314.8" font-size="10" text-anchor="start" fill="#333" >0</text>
<text x="1017.3" y="251.5" font-size="9.5" text-anchor="middle" fill="#333" transform="rotate(90 1017.3 251.5)" dy="3">pu</text>
<line x1="766" y1="311.5" x2="1003" y2="311.5" stroke="#4a4a4a" stroke-width="1" />
<line x1="780.5" y1="309" x2="780.5" y2="314" stroke="#4a4a4a" stroke-width="1" />
<line x1="795.5" y1="309" x2="795.5" y2="314" stroke="#4a4a4a" stroke-width="1" />
<line x1="810.5" y1="309" x2="810.5" y2="314" stroke="#4a4a4a" stroke-width="1" />
<line x1="825.5" y1="309" x2="825.5" y2="314" stroke="#4a4a4a" stroke-width="1" />
<line x1="839.5" y1="309" x2="839.5" y2="314" stroke="#4a4a4a" stroke-width="1" />
<line x1="854.5" y1="309" x2="854.5" y2="314" stroke="#4a4a4a" stroke-width="1" />
<line x1="869.5" y1="309" x2="869.5" y2="314" stroke="#4a4a4a" stroke-width="1" />
<line x1="884.5" y1="309" x2="884.5" y2="314" stroke="#4a4a4a" stroke-width="1" />
<line x1="898.5" y1="309" x2="898.5" y2="314" stroke="#4a4a4a" stroke-width="1" />
<line x1="913.5" y1="309" x2="913.5" y2="314" stroke="#4a4a4a" stroke-width="1" />
<line x1="928.5" y1="309" x2="928.5" y2="314" stroke="#4a4a4a" stroke-width="1" />
<line x1="943.5" y1="309" x2="943.5" y2="314" stroke="#4a4a4a" stroke-width="1" />
<line x1="957.5" y1="309" x2="957.5" y2="314" stroke="#4a4a4a" stroke-width="1" />
<line x1="972.5" y1="309" x2="972.5" y2="314" stroke="#4a4a4a" stroke-width="1" />
<line x1="987.5" y1="309" x2="987.5" y2="314" stroke="#4a4a4a" stroke-width="1" />
<line x1="1002.5" y1="309" x2="1002.5" y2="314" stroke="#4a4a4a" stroke-width="1" />
<text x="781.1" y="325" font-size="9" text-anchor="middle" fill="#333" >01:15</text>
<text x="825.1600000000001" y="325" font-size="9" text-anchor="middle" fill="#333" >02:00</text>
<text x="869.22" y="325" font-size="9" text-anchor="middle" fill="#333" >02:45</text>
<text x="913.28" y="325" font-size="9" text-anchor="middle" fill="#333" >03:30</text>
<text x="957.34" y="325" font-size="9" text-anchor="middle" fill="#333" >04:15</text>
<text x="1001.4000000000001" y="325" font-size="9" text-anchor="middle" fill="#333" >05:00</text>
<line x1="766" y1="299.3" x2="999.6" y2="299.3" stroke="#3b91e8" stroke-width="2.2" />
<line x1="771.5" y1="457" x2="771.5" y2="555" stroke="#e6e8ec" stroke-width="1" />
<line x1="771" y1="457.5" x2="1000" y2="457.5" stroke="#7ec0f0" stroke-width="1" stroke-dasharray="2.5,2"/>
<line x1="771" y1="506.5" x2="1000" y2="506.5" stroke="#e6e8ec" stroke-width="1" />
<line x1="1002.5" y1="457" x2="1002.5" y2="556" stroke="#4a4a4a" stroke-width="1" />
<line x1="999.5" y1="457.5" x2="1005" y2="457.5" stroke="#4a4a4a" stroke-width="1" />
<line x1="999.5" y1="481.5" x2="1005" y2="481.5" stroke="#4a4a4a" stroke-width="1" />
<line x1="999.5" y1="506.5" x2="1005" y2="506.5" stroke="#4a4a4a" stroke-width="1" />
<line x1="999.5" y1="530.5" x2="1005" y2="530.5" stroke="#4a4a4a" stroke-width="1" />
<line x1="999.5" y1="555.5" x2="1005" y2="555.5" stroke="#4a4a4a" stroke-width="1" />
<text x="1006" y="460.8" font-size="10" text-anchor="start" fill="#333" >2</text>
<text x="1006" y="509.8" font-size="10" text-anchor="start" fill="#333" >1</text>
<text x="1006" y="558.8" font-size="10" text-anchor="start" fill="#333" >0</text>
<text x="1018" y="505.5" font-size="9.5" text-anchor="middle" fill="#333" transform="rotate(90 1018 505.5)" dy="3">pu</text>
<line x1="771" y1="555.5" x2="1003" y2="555.5" stroke="#4a4a4a" stroke-width="1" />
<line x1="785.5" y1="553" x2="785.5" y2="557.5" stroke="#4a4a4a" stroke-width="1" />
<line x1="800.5" y1="553" x2="800.5" y2="557.5" stroke="#4a4a4a" stroke-width="1" />
<line x1="814.5" y1="553" x2="814.5" y2="557.5" stroke="#4a4a4a" stroke-width="1" />
<line x1="829.5" y1="553" x2="829.5" y2="557.5" stroke="#4a4a4a" stroke-width="1" />
<line x1="843.5" y1="553" x2="843.5" y2="557.5" stroke="#4a4a4a" stroke-width="1" />
<line x1="857.5" y1="553" x2="857.5" y2="557.5" stroke="#4a4a4a" stroke-width="1" />
<line x1="872.5" y1="553" x2="872.5" y2="557.5" stroke="#4a4a4a" stroke-width="1" />
<line x1="886.5" y1="553" x2="886.5" y2="557.5" stroke="#4a4a4a" stroke-width="1" />
<line x1="901.5" y1="553" x2="901.5" y2="557.5" stroke="#4a4a4a" stroke-width="1" />
<line x1="915.5" y1="553" x2="915.5" y2="557.5" stroke="#4a4a4a" stroke-width="1" />
<line x1="929.5" y1="553" x2="929.5" y2="557.5" stroke="#4a4a4a" stroke-width="1" />
<line x1="944.5" y1="553" x2="944.5" y2="557.5" stroke="#4a4a4a" stroke-width="1" />
<line x1="958.5" y1="553" x2="958.5" y2="557.5" stroke="#4a4a4a" stroke-width="1" />
<line x1="973.5" y1="553" x2="973.5" y2="557.5" stroke="#4a4a4a" stroke-width="1" />
<line x1="987.5" y1="553" x2="987.5" y2="557.5" stroke="#4a4a4a" stroke-width="1" />
<line x1="1001.5" y1="553" x2="1001.5" y2="557.5" stroke="#4a4a4a" stroke-width="1" />
<text x="785.0" y="569" font-size="9" text-anchor="middle" fill="#333" >01:15</text>
<text x="828.36" y="569" font-size="9" text-anchor="middle" fill="#333" >02:00</text>
<text x="871.72" y="569" font-size="9" text-anchor="middle" fill="#333" >02:45</text>
<text x="915.0799999999999" y="569" font-size="9" text-anchor="middle" fill="#333" >03:30</text>
<text x="958.44" y="569" font-size="9" text-anchor="middle" fill="#333" >04:15</text>
<text x="1001.8" y="569" font-size="9" text-anchor="middle" fill="#333" >05:00</text>
<polyline points="771.5,542 784.9,552.2 799.5,542.8 813.3,540.2 828.5,522.1 842.3,539.5 857.6,552.2 871.4,552.2 885.5,541.3 900.4,552.2 915,552.2 929.5,552.2 944.8,552.2 958.3,553.6 972.4,552.3 974.1,544.8 978.6,543.5 980.8,551.1 982.4,544.8 984.6,554.5 986.6,537.8 988.2,553.1 990.7,539 992.9,549 994.9,546.5 997.4,540.7 999.9,551.8" fill="none" stroke="#3b91e8" stroke-width="2.2" stroke-linejoin="miter"/>
</svg>
</body></html>
